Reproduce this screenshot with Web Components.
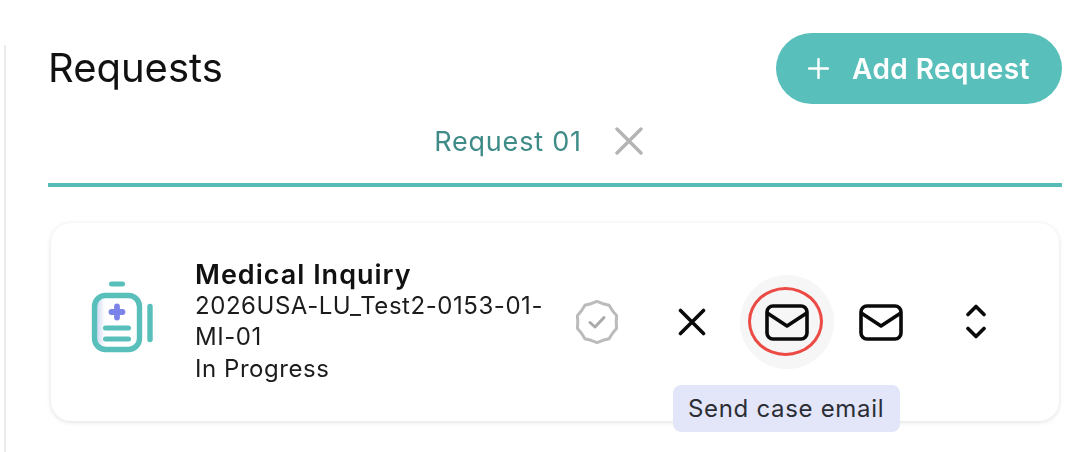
<!DOCTYPE html>
<html lang="en">
<head>
<meta charset="utf-8">
<title>Requests</title>
<style>
    html, body { margin: 0; height: 100%; background: #fff; overflow: hidden; }
    body { font-family: Inter, "Liberation Sans", sans-serif; color: #111; }
</style>
</head>
<body>
<requests-panel>
    <add-request slot="action">Add Request</add-request>
    <request-tab slot="tabs">Request 01</request-tab>
    <request-card
        title="Medical Inquiry"
        code="2026USA-LU_Test2-0153-01-MI-01"
        status="In Progress"></request-card>
</requests-panel>

<script>
class RequestsPanel extends HTMLElement {
    constructor() {
        super();
        this.attachShadow({ mode: 'open' });
        this.shadowRoot.innerHTML = `
            <style>
                :host {
                    display: block;
                    height: 452px;
                    box-sizing: border-box;
                    padding: 33px 6px 0 48px;
                    background: linear-gradient(#ececec, #ececec) 4px 45px / 2px 100% no-repeat;
                    filter: blur(0.4px);
                }
                header {
                    display: flex;
                    justify-content: space-between;
                    align-items: flex-start;
                }
                h1 {
                    margin: 11px 0 0 0;
                    font-size: 40px;
                    line-height: 48px;
                    font-weight: 400;
                    color: #111;
                }
                .tabs {
                    display: flex;
                    justify-content: center;
                    border-bottom: 4px solid #58bbb6;
                    height: 83px;
                    box-sizing: border-box;
                    margin-bottom: 36px;
                }
                .content { padding: 0 3px; }
            </style>
            <header>
                <h1>Requests</h1>
                <slot name="action"></slot>
            </header>
            <div class="tabs"><slot name="tabs"></slot></div>
            <div class="content"><slot></slot></div>
        `;
    }
}

class AddRequest extends HTMLElement {
    constructor() {
        super();
        this.attachShadow({ mode: 'open' });
        this.shadowRoot.innerHTML = `
            <style>
                :host {
                    display: flex;
                    align-items: center;
                    box-sizing: border-box;
                    width: 286px;
                    height: 71px;
                    padding-left: 32px;
                    gap: 23px;
                    border-radius: 36px;
                    background: #58bfbb;
                    color: #fff;
                    font-size: 28px;
                    font-weight: 600;
                    letter-spacing: 0.45px;
                }
                svg { width: 21px; height: 21px; flex: none; }
            </style>
            <svg viewBox="0 0 21 21" fill="none" stroke="#fff" stroke-width="2.4" stroke-linecap="round">
                <path d="M10.5 1v19M1 10.5h19"/>
            </svg>
            <span><slot></slot></span>
        `;
    }
}

class RequestTab extends HTMLElement {
    constructor() {
        super();
        this.attachShadow({ mode: 'open' });
        this.shadowRoot.innerHTML = `
            <style>
                :host {
                    display: flex;
                    align-items: center;
                    height: 74px;
                    margin-right: 33px;
                    gap: 33px;
                    color: #3f8b88;
                    font-size: 27px;
                    letter-spacing: 0.8px;
                }
                svg { width: 28px; height: 28px; flex: none; }
            </style>
            <span><slot></slot></span>
            <svg viewBox="0 0 28 28" fill="none" stroke="#b4b4b4" stroke-width="3.4" stroke-linecap="round">
                <path d="M2 2l24 24M26 2L2 26"/>
            </svg>
        `;
    }
}

class ActionButton extends HTMLElement {
    static get observedAttributes() {
        return ['tooltip'];
    }

    constructor() {
        super();
        this.attachShadow({ mode: 'open' });
    }

    connectedCallback() {
        this.render();
    }

    attributeChangedCallback() {
        this.render();
    }

    render() {
        const tooltip = this.getAttribute('tooltip');
        this.shadowRoot.innerHTML = `
            <style>
                :host {
                    position: relative;
                    display: flex;
                    align-items: center;
                    justify-content: center;
                    width: 94.6px;
                    height: 94px;
                    flex: none;
                    border-radius: 50%;
                }
                :host([active]) { background: #f6f6f6; }
                :host([active])::before {
                    content: '';
                    position: absolute;
                    left: 8px;
                    top: 12px;
                    width: 69px;
                    height: 63px;
                    border: 3.5px solid #ec4b45;
                    border-radius: 50%;
                }
                .tip {
                    position: absolute;
                    left: -67px;
                    top: 110px;
                    width: 227px;
                    height: 47px;
                    box-sizing: border-box;
                    display: flex;
                    align-items: center;
                    justify-content: center;
                    border-radius: 8px;
                    background: #e3e6f8;
                    color: #2c2e36;
                    font-size: 24px;
                    letter-spacing: 0.68px;
                    white-space: nowrap;
                }
            </style>
            <slot></slot>
            ${tooltip ? `<div class="tip">${tooltip}</div>` : ''}
        `;
    }
}

const MAIL = `<svg width="44" height="37" viewBox="0 0 44 37" fill="none" stroke="#0a0a0a" stroke-width="3.6" stroke-linecap="round" stroke-linejoin="round">
    <rect x="2" y="2" width="40" height="33" rx="6"/>
    <path d="M3 9.5L22 22 41 9.5"/>
</svg>`;

// scalloped outline of the verified badge
function badgePoints() {
    const points = [];
    for (let i = 0; i < 20; i++) {
        const r = i % 2 ? 19.2 : 20.6;
        const a = (i * Math.PI) / 10 - Math.PI / 2;
        points.push(`${(23 + r * Math.cos(a)).toFixed(1)},${(23 + r * Math.sin(a)).toFixed(1)}`);
    }
    return points.join(' ');
}

class RequestCard extends HTMLElement {
    constructor() {
        super();
        this.attachShadow({ mode: 'open' });
    }

    connectedCallback() {
        const title = this.getAttribute('title');
        const code = this.getAttribute('code');
        const status = this.getAttribute('status');
        this.shadowRoot.innerHTML = `
            <style>
                :host {
                    display: flex;
                    align-items: center;
                    box-sizing: border-box;
                    height: 198px;
                    padding-left: 39px;
                    border-radius: 20px;
                    background: #fff;
                    box-shadow: 0 1px 5px rgba(0,0,0,0.13);
                }
                .type { width: 66px; height: 72px; flex: none; margin-top: -10px; }
                .info {
                    width: 356px;
                    margin-left: 39px;
                    flex: none;
                    font-size: 24px;
                    line-height: 31.5px;
                    letter-spacing: 0.55px;
                    color: #1c1c1c;
                    margin-top: -1px;
                }
                .info b {
                    display: block;
                    font-size: 27px;
                    line-height: 31px;
                    font-weight: 600;
                    color: #111;
                    letter-spacing: 1px;
                }
                .badge { width: 46px; height: 46px; flex: none; margin-left: 23px; }
                .actions {
                    display: flex;
                    align-items: center;
                    margin-left: 25px;
                }
            </style>
            <svg class="type" viewBox="0 0 66 72" fill="none" stroke-linecap="round">
                <defs>
                    <linearGradient id="shade">
                        <stop offset="0" stop-color="#cfdaf0"/>
                        <stop offset="1" stop-color="#fff"/>
                    </linearGradient>
                </defs>
                <rect x="7" y="17" width="8" height="49" fill="url(#shade)"/>
                <rect x="4.5" y="14.5" width="45" height="54" rx="11" stroke="#58bfbb" stroke-width="5.4"/>
                <path d="M21.5 3h11" stroke="#58bfbb" stroke-width="5"/>
                <path d="M60 25.5v33" stroke="#58bfbb" stroke-width="5.4"/>
                <path d="M15.5 47h23M15.5 58h23" stroke="#58bfbb" stroke-width="5"/>
                <path d="M27 25.5v11M21.5 31h11" stroke="#7c84ea" stroke-width="5.8"/>
            </svg>
            <div class="info">
                <b>${title}</b>
                <div>${code}</div>
                <div>${status}</div>
            </div>
            <svg class="badge" viewBox="0 0 46 46" fill="none" stroke="#bbb" stroke-linecap="round" stroke-linejoin="round">
                <polygon stroke-width="3" points="${badgePoints()}"/>
                <path stroke-width="3" stroke="#aaa" d="M16 23.5l5 4.5 9-9.5"/>
            </svg>
            <div class="actions">
                <action-button>
                    <svg width="28" height="28" viewBox="0 0 28 28" fill="none" stroke="#0a0a0a" stroke-width="3.6" stroke-linecap="round">
                        <path d="M2.5 2.5l23 23M25.5 2.5l-23 23"/>
                    </svg>
                </action-button>
                <action-button active tooltip="Send case email">${MAIL}</action-button>
                <action-button>${MAIL}</action-button>
                <action-button>
                    <svg width="20" height="36" viewBox="0 0 20 36" fill="none" stroke="#0a0a0a" stroke-width="3.6" stroke-linecap="round" stroke-linejoin="round">
                        <path d="M2 10.5l8-8 8 8M2 24.5l8 8 8-8"/>
                    </svg>
                </action-button>
            </div>
        `;
    }
}

customElements.define('requests-panel', RequestsPanel);
customElements.define('add-request', AddRequest);
customElements.define('request-tab', RequestTab);
customElements.define('action-button', ActionButton);
customElements.define('request-card', RequestCard);
</script>
</body>
</html>
